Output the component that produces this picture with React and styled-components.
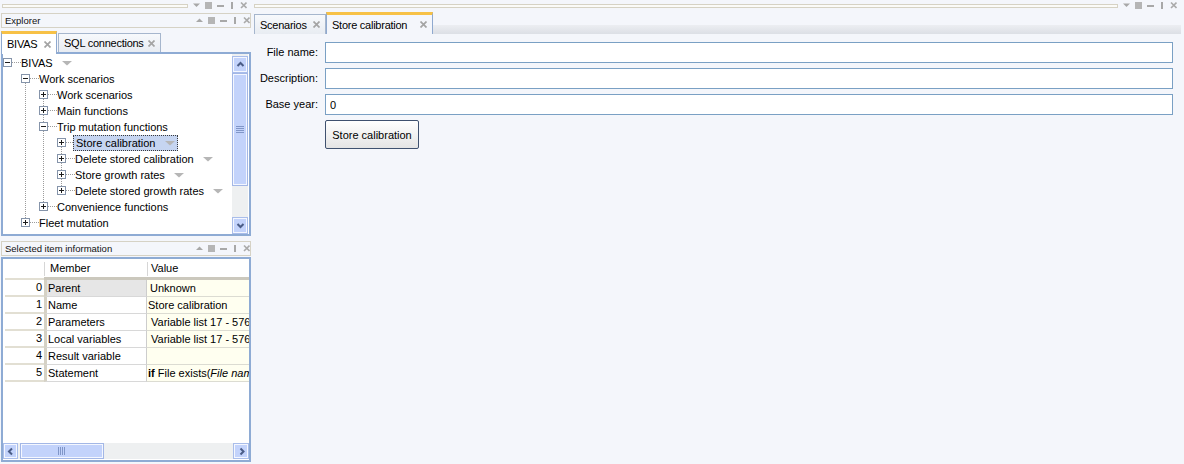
import React from 'react';
import styled, { createGlobalStyle } from 'styled-components';

const FONT = '"Liberation Sans", Arial, sans-serif';

const GlobalStyle = createGlobalStyle`
  html, body { margin: 0; padding: 0; }
  body {
    background: #f4f6fb;
    font-family: ${FONT};
    font-size: 11px;
    color: #000;
    overflow: hidden;
  }
  * { box-sizing: border-box; }
`;

const Page = styled.div`
  display: flex;
  width: 1184px;
  height: 464px;
  background: #f4f6fb;
`;

const LeftColumn = styled.div`
  width: 252px;
  flex-shrink: 0;
  display: flex;
  flex-direction: column;
`;

const RightColumn = styled.div`
  flex: 1;
  min-width: 0;
  display: flex;
  flex-direction: column;
  padding-left: 2px;
`;

/* ---------- dock strip & panel header ---------- */
const DockStrip = styled.div`
  height: 11px;
  display: flex;
  align-items: center;
  gap: 5px;
  padding: 0 ${p => p.$right}px 0 ${p => p.$left}px;
`;

const CaptionTrack = styled.div`
  flex: 1;
  height: 4px;
  margin-top: 1px;
  border: 1px solid #d6d2c4;
  background: #fbfbf8;
`;

const ControlsSvg = styled.svg`
  display: block;
  flex-shrink: 0;
`;

const DockControls = ({ up }) => (
  <ControlsSvg width="54" height="9" viewBox="0 0 54 9">
    <polygon points={up ? '0,6 7,6 3.5,2.5' : '0,2.5 7,2.5 3.5,6'} fill="#a8a8a8" />
    <rect x="12" y="1" width="7" height="7" fill="#b5b5b5" />
    <rect x="24" y="4" width="7" height="2" fill="#a8a8a8" />
    <rect x="38" y="1" width="2" height="7" fill="#a8a8a8" />
    <path d="M48 1.5 L53.5 7 M53.5 1.5 L48 7" stroke="#aaaaaa" strokeWidth="1.6" />
  </ControlsSvg>
);

const PanelHeader = styled.div`
  margin: ${p => p.$top}px 1px 0 1px;
  height: 15px;
  border: 1px solid #d6d2c5;
  display: flex;
  align-items: center;
  justify-content: space-between;
  padding: 0 0 0 3px;
  font-size: 9.5px;
  color: #111;
`;

/* ---------- tabs ---------- */
const TabRow = styled.div`
  display: flex;
  align-items: flex-end;
  gap: 1px;
  height: 21px;
  margin: 3px 0 0 1px;
`;

const Tab = styled.div`
  position: relative;
  z-index: ${p => (p.$active ? 2 : 0)};
  display: flex;
  align-items: center;
  justify-content: space-between;
  width: ${p => p.$w}px;
  height: ${p => p.$h}px;
  margin-bottom: ${p => (p.$active ? p.$overlap : 0)}px;
  padding: 0 5px 0 5px;
  border: 1px solid ${p => (p.$active ? '#8fa9cf' : '#a6b6cd')};
  border-bottom: none;
  border-top: ${p => (p.$active ? '3px solid #f7c146' : '1px solid #a6b6cd')};
  background: ${p => (p.$active ? p.$bg : 'linear-gradient(#f7f9fc, #e8ecf2)')};
  font-size: 11px;
  letter-spacing: -0.25px;
  color: #000;
  white-space: nowrap;
`;

const CloseSvg = styled.svg`
  display: block;
  flex-shrink: 0;
`;

const CloseIcon = () => (
  <CloseSvg width="7" height="7" viewBox="0 0 7 7">
    <path d="M0.5 0.5 L6.5 6.5 M6.5 0.5 L0.5 6.5" stroke="#a4a4a4" strokeWidth="1.7" />
  </CloseSvg>
);

/* ---------- tree ---------- */
const TreeBox = styled.div`
  margin-left: 1px;
  width: 250px;
  height: 184px;
  display: flex;
  border: 2px solid #8eabd4;
  background: #fff;
`;

const TreeContent = styled.div`
  flex: 1;
  padding-top: 1px;
  overflow: hidden;
`;

const TreeRow = styled.div`
  display: flex;
  align-items: center;
  height: 16px;
`;

const CellSvg = styled.svg`
  display: block;
  flex-shrink: 0;
`;

const TreeLabel = styled.div`
  display: flex;
  align-items: center;
  height: 16px;
  margin-left: ${p => (p.$selected ? -2 : -3)}px;
  padding: 0 2px;
  border: 1px ${p => (p.$selected ? 'dotted #3a3a3a' : 'solid transparent')};
  background: ${p => (p.$selected ? '#c6d5f1' : 'transparent')};
  white-space: nowrap;
  font-size: 11px;
`;

const MenuSvg = styled.svg`
  display: block;
  margin-left: 9px;
  flex-shrink: 0;
`;

const MenuArrow = () => (
  <MenuSvg width="10" height="5" viewBox="0 0 10 5">
    <polygon points="0,0 10,0 5,4.5" fill="#b6b6b6" />
  </MenuSvg>
);

const dot = { stroke: '#9c9c9c', strokeDasharray: '1 1' };

const GuideCell = ({ line, exp }) => (
  <CellSvg width="18" height="16" viewBox="0 0 18 16">
    {line === 'full' && <line x1="4.5" y1="0" x2="4.5" y2="16" {...dot} />}
    {line === 'top' && <line x1="4.5" y1="0" x2="4.5" y2="7" {...dot} />}
    {line === 'bottom' && <line x1="4.5" y1="8" x2="4.5" y2="16" {...dot} />}
    {exp && (
      <>
        <line x1="9" y1="7.5" x2="18" y2="7.5" {...dot} />
        <rect x="0.5" y="3.5" width="8" height="8" fill="#fff" stroke="#8594aa" />
        <line x1="2" y1="7.5" x2="7" y2="7.5" stroke="#1c1c1c" />
        {exp === '+' && <line x1="4.5" y1="5" x2="4.5" y2="10" stroke="#1c1c1c" />}
      </>
    )}
  </CellSvg>
);

const treeRows = [
  { label: 'BIVAS', exp: '-', lines: [null], menu: true },
  { label: 'Work scenarios', exp: '-', lines: [null, 'bottom'] },
  { label: 'Work scenarios', exp: '+', lines: [null, 'full', 'bottom'] },
  { label: 'Main functions', exp: '+', lines: [null, 'full', 'full'] },
  { label: 'Trip mutation functions', exp: '-', lines: [null, 'full', 'full'] },
  { label: 'Store calibration', exp: '+', lines: [null, 'full', 'full', 'bottom'], menu: true, selected: true },
  { label: 'Delete stored calibration', exp: '+', lines: [null, 'full', 'full', 'full'], menu: true },
  { label: 'Store growth rates', exp: '+', lines: [null, 'full', 'full', 'full'], menu: true },
  { label: 'Delete stored growth rates', exp: '+', lines: [null, 'full', 'full', 'top'], menu: true },
  { label: 'Convenience functions', exp: '+', lines: [null, 'full', 'top'] },
  { label: 'Fleet mutation', exp: '+', lines: [null, 'top'] },
];

/* ---------- scrollbars ---------- */
const VScroll = styled.div`
  width: 16px;
  margin-right: 1px;
  padding-top: 2px;
  display: flex;
  flex-direction: column;
  background: #eef0f1;
`;

const HScroll = styled.div`
  height: 16px;
  margin-bottom: 1px;
  display: flex;
  background: #eef0f1;
`;

const ScrollButton = styled.div`
  flex-shrink: 0;
  width: ${p => p.$w}px;
  height: ${p => p.$h}px;
  display: flex;
  align-items: center;
  justify-content: center;
  background: #c3d3fb;
  border: 1px solid #a9bdea;
  box-shadow: inset 0 0 0 1px #f4f7ff;
`;

const Thumb = styled.div`
  flex-shrink: 0;
  width: ${p => p.$w}px;
  height: ${p => p.$h}px;
  margin-left: ${p => p.$ml || 0}px;
  display: flex;
  align-items: center;
  justify-content: center;
  background: #c3d3fb;
  border: 1px solid #a3b7e6;
  box-shadow: inset 0 0 0 1px #f4f7ff;
`;

const Track = styled.div`
  flex: 1;
`;

const ArrowSvg = styled.svg`
  display: block;
`;

const Chevron = ({ dir }) => {
  const d = {
    up: 'M1.5 5 L4.5 2 L7.5 5',
    down: 'M1.5 2 L4.5 5 L7.5 2',
    left: 'M5 1.5 L2 4.5 L5 7.5',
    right: 'M2.5 1.5 L5.5 4.5 L2.5 7.5',
  }[dir];
  const vertical = dir === 'up' || dir === 'down';
  return (
    <ArrowSvg width={vertical ? 9 : 7} height={vertical ? 7 : 9} viewBox={vertical ? '0 0 9 7' : '0 0 7 9'}>
      <path d={d} stroke="#4b5d87" strokeWidth="2" fill="none" />
    </ArrowSvg>
  );
};

const Grip = ({ vertical }) =>
  vertical ? (
    <ArrowSvg width="8" height="8" viewBox="0 0 8 8">
      {[0.5, 2.5, 4.5, 6.5].map(y => (
        <line key={y} x1="0" y1={y} x2="8" y2={y} stroke="#8096c8" />
      ))}
    </ArrowSvg>
  ) : (
    <ArrowSvg width="8" height="8" viewBox="0 0 8 8">
      {[0.5, 2.5, 4.5, 6.5].map(x => (
        <line key={x} x1={x} y1="0" x2={x} y2="8" stroke="#8096c8" />
      ))}
    </ArrowSvg>
  );

/* ---------- grid ---------- */
const GridBox = styled.div`
  margin: 1px 0 0 1px;
  width: 250px;
  height: 205px;
  border: 2px solid #8eabd4;
  background: #fff;
  display: flex;
  flex-direction: column;
`;

const GridRow = styled.div`
  display: flex;
  height: ${p => p.$h}px;
  flex-shrink: 0;
`;

const HeaderIndicator = styled.div`
  width: 39px;
  margin-left: 2px;
  border-bottom: 2px solid #e2dfd3;
`;

const HeaderCell = styled.div`
  ${p => (p.$w ? `width: ${p.$w}px;` : 'flex: 1;')}
  padding-left: ${p => p.$pad}px;
  border-bottom: 3px solid #cbc8bd;
  line-height: 18px;
  background: linear-gradient(#d6d6d6, #d6d6d6) left 3px / 1px 14px no-repeat;
  overflow: hidden;
  white-space: nowrap;
`;

const RowIndicator = styled.div`
  width: 39px;
  margin-left: 2px;
  border-bottom: 2px solid #e2dfd3;
  text-align: right;
  padding-right: 2px;
  line-height: 15px;
`;

const MemberCell = styled.div`
  width: 103px;
  border-left: 3px solid #d6d2c5;
  border-right: 1px solid #cdcdcd;
  border-bottom: 1px solid #d8d8d8;
  background: ${p => (p.$sel ? '#e6e6e6' : '#fff')};
  padding-left: 1px;
  line-height: 16px;
  white-space: nowrap;
  overflow: hidden;
`;

const ValueCell = styled.div`
  flex: 1;
  min-width: 0;
  background: #fffff0;
  border-bottom: 1px solid #dcdcd2;
  padding-left: ${p => p.$pad}px;
  line-height: 16px;
  white-space: nowrap;
  overflow: hidden;
`;

const GridFill = styled.div`
  flex: 1;
`;

const gridRows = [
  { member: 'Parent', value: 'Unknown', pad: 3, sel: true },
  { member: 'Name', value: 'Store calibration', pad: 1 },
  { member: 'Parameters', value: 'Variable list 17 - 5760', pad: 4 },
  { member: 'Local variables', value: 'Variable list 17 - 5760', pad: 4 },
  { member: 'Result variable', value: '', pad: 3 },
  {
    member: 'Statement',
    value: (
      <>
        <b>if</b> File exists(<i>File name</i>) then
      </>
    ),
    pad: 1,
  },
];

/* ---------- right document area ---------- */
const DocTabStrip = styled.div`
  margin-top: 1px;
  height: 22px;
  margin-right: 3px;
  display: flex;
  align-items: flex-end;
  background: linear-gradient(to bottom, transparent 13px, #eceef2 13px, #dcdfe5 22px);
`;

const Form = styled.div`
  display: grid;
  grid-template-columns: 60px 1fr;
  grid-auto-rows: 21px;
  column-gap: 7px;
  row-gap: 5px;
  padding: 8px 11px 0 4px;
`;

const FieldLabel = styled.label`
  text-align: right;
  line-height: 21px;
  font-size: 11px;
  white-space: nowrap;
`;

const TextBox = styled.input`
  height: 21px;
  width: 100%;
  border: 1px solid #7aa0c4;
  background: #fff;
  padding: 0 4px;
  font-family: ${FONT};
  font-size: 11px;
  color: #000;
  outline: none;
`;

const ActionButton = styled.button`
  grid-column: 2;
  justify-self: start;
  width: 94px;
  height: 29px;
  border: 1px solid #3f516f;
  border-radius: 2px;
  background: linear-gradient(#ffffff, #f3f3f3 45%, #e4e4e4);
  font-family: ${FONT};
  font-size: 11px;
  color: #000;
  padding: 0;
`;

export default function App() {
  return (
    <>
      <GlobalStyle />
      <Page>
        <LeftColumn>
          <DockStrip $left={2} $right={5}>
            <CaptionTrack />
            <DockControls />
          </DockStrip>

          <PanelHeader $top={2}>
            <span>Explorer</span>
            <DockControls up />
          </PanelHeader>

          <TabRow>
            <Tab $active $w={56} $h={23} $overlap={-2} $bg="#fff">
              <span>BIVAS</span>
              <CloseIcon />
            </Tab>
            <Tab $w={103} $h={19}>
              <span>SQL connections</span>
              <CloseIcon />
            </Tab>
          </TabRow>

          <TreeBox>
            <TreeContent>
              {treeRows.map((r, i) => (
                <TreeRow key={i}>
                  {r.lines.map((ln, j) => (
                    <GuideCell key={j} line={ln} exp={j === r.lines.length - 1 ? r.exp : null} />
                  ))}
                  <TreeLabel $selected={r.selected}>
                    {r.label}
                    {r.menu && <MenuArrow />}
                  </TreeLabel>
                </TreeRow>
              ))}
            </TreeContent>
            <VScroll>
              <ScrollButton $w={16} $h={17}>
                <Chevron dir="up" />
              </ScrollButton>
              <Thumb $w={16} $h={113}>
                <Grip vertical />
              </Thumb>
              <Track />
              <ScrollButton $w={16} $h={17}>
                <Chevron dir="down" />
              </ScrollButton>
            </VScroll>
          </TreeBox>

          <PanelHeader $top={5}>
            <span>Selected item information</span>
            <DockControls up />
          </PanelHeader>

          <GridBox>
            <GridRow $h={21}>
              <HeaderIndicator />
              <HeaderCell $w={103} $pad={6}>Member</HeaderCell>
              <HeaderCell $pad={4}>Value</HeaderCell>
            </GridRow>
            {gridRows.map((r, i) => (
              <GridRow key={i} $h={17}>
                <RowIndicator>{i}</RowIndicator>
                <MemberCell $sel={r.sel}>{r.member}</MemberCell>
                <ValueCell $pad={r.pad}>{r.value}</ValueCell>
              </GridRow>
            ))}
            <GridFill />
            <HScroll>
              <ScrollButton $w={15} $h={16}>
                <Chevron dir="left" />
              </ScrollButton>
              <Thumb $w={84} $h={16} $ml={2}>
                <Grip />
              </Thumb>
              <Track />
              <ScrollButton $w={16} $h={16}>
                <Chevron dir="right" />
              </ScrollButton>
            </HScroll>
          </GridBox>
        </LeftColumn>

        <RightColumn>
          <DockStrip $left={0} $right={7}>
            <CaptionTrack />
            <DockControls />
          </DockStrip>

          <DocTabStrip>
            <Tab $w={72} $h={20}>
              <span>Scenarios</span>
              <CloseIcon />
            </Tab>
            <Tab $active $w={107} $h={22} $overlap={0} $bg="#f4f6fb">
              <span>Store calibration</span>
              <CloseIcon />
            </Tab>
          </DocTabStrip>

          <Form>
            <FieldLabel>File name:</FieldLabel>
            <TextBox defaultValue="" />
            <FieldLabel>Description:</FieldLabel>
            <TextBox defaultValue="" />
            <FieldLabel>Base year:</FieldLabel>
            <TextBox defaultValue="0" />
            <ActionButton>Store calibration</ActionButton>
          </Form>
        </RightColumn>
      </Page>
    </>
  );
}
